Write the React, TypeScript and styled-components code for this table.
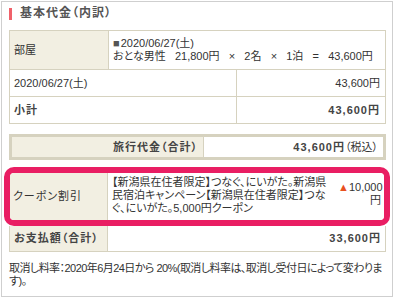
import React from "react";
import styled, { createGlobalStyle } from "styled-components";

const GlobalStyle = createGlobalStyle`
  body {
    margin: 0;
    background: #fff;
    font-family: "Liberation Sans", "Noto Sans CJK JP", sans-serif;
    font-size: 11px;
    line-height: 13px;
    color: #333;
    font-feature-settings: "palt" 1;
  }
`;

const rule = "#d6d2bf";
const labelBg = "#f2efe2";
const pink = "#e91e63";

const Panel = styled.section`
  box-sizing: border-box;
  width: 392px;
  height: 296px;
  margin: 1px;
  padding: 0 6px 0 7px;
  border: 1px solid #cfcfcf;
  overflow: hidden;
`;

const Heading = styled.h2`
  display: flex;
  align-items: center;
  gap: 8px;
  height: 23px;
  margin: 0 0 5px;
  font-size: 12px;
  font-weight: bold;
  letter-spacing: 1px;
  color: #555;

  &::before {
    content: "";
    width: 3px;
    height: 12px;
    background: #f0616a;
  }
`;

const Table = styled.table<{ $thick?: boolean }>`
  width: 100%;
  border-collapse: collapse;
  table-layout: fixed;
  border: ${(p) => (p.$thick ? `3px solid ${rule}` : "none")};
  margin-top: ${(p) => (p.$thick ? "10px" : "0")};
`;

const Col = styled.col<{ $width?: number }>`
  width: ${(p) => (p.$width ? `${p.$width}px` : "auto")};
`;

const Row = styled.tr<{ $height: number }>`
  height: ${(p) => p.$height}px;
`;

const Cell = styled.td<{ $right?: boolean; $bold?: boolean; $label?: boolean }>`
  padding: 0 5px 0 4px;
  border: 1px solid ${rule};
  background: ${(p) => (p.$label ? labelBg : "#fff")};
  text-align: ${(p) => (p.$right ? "right" : "left")};
  font-weight: ${(p) => (p.$bold ? "bold" : "normal")};
  letter-spacing: ${(p) => (p.$bold ? "1px" : "0")};
  color: ${(p) => (p.$bold ? "#444" : "#333")};
  vertical-align: middle;

  strong {
    letter-spacing: 1px;
    color: #444;
  }
`;

const Square = styled.span`
  color: #555;
  margin-right: 1px;
`;

const CouponFrame = styled.div`
  display: grid;
  grid-template-columns: 98px 1fr 46px;
  margin: 7px -4px 0 -5px;
  border: 6px solid ${pink};
  border-radius: 10px;
  overflow: hidden;
`;

const CouponLabel = styled.div`
  display: flex;
  align-items: center;
  padding-left: 3px;
  background: ${labelBg};
  border-right: 1px solid ${rule};
  letter-spacing: 1px;
`;

const CouponText = styled.div`
  padding: 3px 4px 5px;
  background: #fff;
  white-space: nowrap;
`;

const CouponAmount = styled.div`
  padding: 8px 3px 0 0;
  text-align: right;
  background: #fff;
`;

const Minus = styled.span`
  color: #e8501e;
  font-size: 11px;
`;

const PaymentRow = styled.div`
  display: grid;
  grid-template-columns: 98px 1fr;
  height: 25px;
  border: 1px solid ${rule};
  border-top: none;
  font-weight: bold;
  letter-spacing: 1px;
  color: #444;
`;

const PaymentLabel = styled.div`
  display: flex;
  align-items: center;
  padding-left: 4px;
  background: ${labelBg};
  border-right: 1px solid ${rule};
`;

const PaymentValue = styled.div`
  display: flex;
  align-items: center;
  justify-content: flex-end;
  padding-right: 4px;
`;

const Note = styled.p`
  margin: 10px 0 0;
  color: #333;
  letter-spacing: -0.55px;
`;

const sp = "\u00a0\u00a0\u00a0";

export default function App() {
  return (
    <>
      <GlobalStyle />
      <Panel>
        <Heading>基本代金（内訳）</Heading>

        <Table>
          <colgroup>
            <Col $width={99} />
            <Col $width={128} />
            <Col />
          </colgroup>
          <tbody>
            <Row $height={39}>
              <Cell $label>部屋</Cell>
              <Cell colSpan={2}>
                <Square>■</Square>2020/06/27(土)
                <br />
                おとな男性{sp}21,800円{sp}×{sp}2名{sp}×{sp}1泊{sp}={sp}43,600円
              </Cell>
            </Row>
            <Row $height={27}>
              <Cell colSpan={2}>2020/06/27(土)</Cell>
              <Cell $right>43,600円</Cell>
            </Row>
            <Row $height={27}>
              <Cell colSpan={2} $bold>
                小計
              </Cell>
              <Cell $right $bold>
                43,600円
              </Cell>
            </Row>
          </tbody>
        </Table>

        <Table $thick>
          <colgroup>
            <Col $width={193} />
            <Col />
          </colgroup>
          <tbody>
            <Row $height={23}>
              <Cell $label $right $bold>
                旅行代金（合計）
              </Cell>
              <Cell $right>
                <strong>43,600円</strong>（税込）
              </Cell>
            </Row>
          </tbody>
        </Table>

        <CouponFrame>
          <CouponLabel>クーポン割引</CouponLabel>
          <CouponText>
            【新潟県在住者限定】つなぐ、にいがた。新潟県
            <br />
            民宿泊キャンペーン【新潟県在住者限定】つな
            <br />
            ぐ、にいがた。5,000円クーポン
          </CouponText>
          <CouponAmount>
            <Minus>▲</Minus>10,000
            <br />円
          </CouponAmount>
        </CouponFrame>

        <PaymentRow>
          <PaymentLabel>お支払額（合計）</PaymentLabel>
          <PaymentValue>33,600円</PaymentValue>
        </PaymentRow>

        <Note>
          取消し料率：2020年6月24日から 20%(取消し料率は、取消し受付日によって変わります)。
        </Note>
      </Panel>
    </>
  );
}
